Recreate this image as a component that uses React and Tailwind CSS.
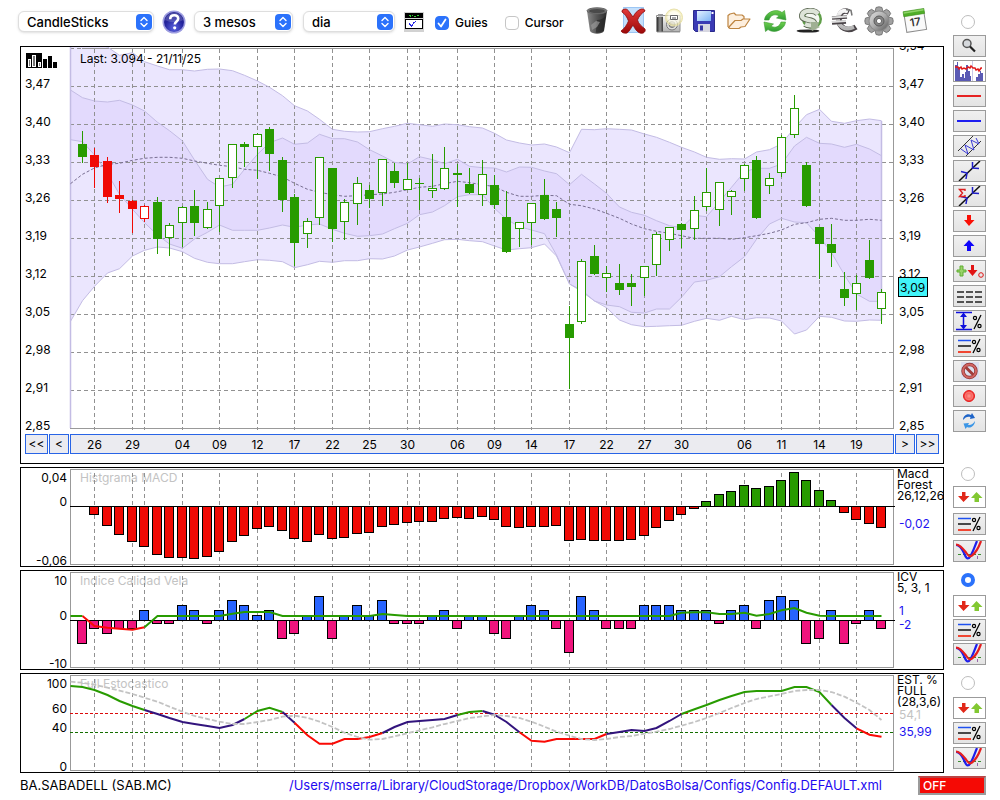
import React, { useState } from "react";

/* ---------- shared chart geometry ---------- */

const LEFT = 70;
const RIGHT = 893;
const xAt = (i) => (i < 0 ? LEFT + 0.5 : Math.floor(82.5 + 12.485 * i) + 0.5);

const GUIDES = [1, 4, 5, 8, 11, 14, 17, 20, 23, 26, 27, 30, 33, 36, 39, 42, 45, 48, 50, 53, 56, 59, 62];

const DATES = [
  [1, "26"], [4, "29"], [8, "04"], [11, "09"], [14, "12"], [17, "17"], [20, "22"], [23, "25"], [26, "30"],
  [30, "06"], [33, "09"], [36, "14"], [39, "17"], [42, "22"], [45, "27"], [48, "30"], [53, "06"], [56, "11"],
  [59, "14"], [62, "19"],
];

/* Series start one step before the first candle. */
const points = (ys, start = -1) => ys.map((y, k) => `${xAt(k + start)},${y}`);
const line = (ys, start = -1) => "M" + points(ys, start).join("L");
const area = (top, bottom) => "M" + points(top).concat(points(bottom).reverse()).join("L") + "Z";

/* ---------- price data (y coordinates) ---------- */

const OUTER_TOP = [
  44, 44, 44, 47, 55.3, 52.7, 61.7, 66, 69.7, 69.7, 71, 69.3, 69, 70.7, 75.3, 81, 87.3, 95.7, 105.7, 111, 119.3,
  129.3, 131.3, 132, 131.7, 128.7, 126.3, 123.3, 124.7, 126.3, 124, 124.7, 126.7, 128, 133.3, 140, 143, 145, 144,
  147, 152.7, 129.3, 129.7, 128.7, 129.3, 130, 134, 137.3, 142.3, 147.3, 152, 157.3, 159.3, 158.7, 159, 152, 149.7,
  144, 127.7, 114.7, 109.3, 121.3, 123.3, 120.7, 119, 120.7,
];
const OUTER_BOTTOM = [
  321.3, 300.7, 286.3, 273, 268.7, 256, 250.3, 247, 248, 251.7, 258.3, 262.3, 263.7, 263.7, 261.7, 259.7, 260.3,
  261.7, 267.7, 264.7, 261.3, 262.3, 260.7, 260.7, 258.7, 259, 256, 250, 247, 243.3, 239.7, 239.3, 240.7, 241.7,
  246, 250, 248.7, 247.7, 244, 256, 284, 291.3, 301, 307.7, 320, 324.7, 326.7, 326.3, 325.7, 325.3, 321.3, 318.3,
  320.3, 316.3, 319.7, 317.7, 318, 321, 334, 330, 316.3, 317.3, 321, 321.3, 320, 320.3,
];
const INNER_TOP = [
  90, 97.7, 101, 102, 100.3, 105, 111, 122.3, 130.7, 141, 160, 179.3, 187, 184.3, 169.3, 154.3, 142.7, 138, 144.3,
  143, 134.3, 138.7, 138.7, 142, 149.7, 156, 162.3, 164, 156.7, 159.7, 163.7, 159.3, 166.3, 167.7, 168, 172, 167,
  167.3, 171, 173.7, 184.7, 174.3, 184, 193.3, 207, 212.3, 215.3, 220.7, 225.7, 227.7, 215.3, 216.7, 201.7, 187.3,
  171.7, 168.3, 168.3, 164, 146, 137.3, 143.3, 144, 147.3, 144.3, 149, 155.7,
];
const INNER_BOTTOM = [
  139.7, 141.7, 155, 173.3, 194.3, 209.3, 222.7, 235, 244, 248.3, 239, 232.3, 225, 230.3, 230.3, 230.3, 228, 225,
  227.3, 225, 224, 229.3, 233.3, 236.3, 235.7, 234, 228.7, 223.3, 214.7, 212, 205.7, 196.7, 194.7, 194.7, 208.3,
  219.3, 226.7, 230, 233.7, 255, 284, 290, 301, 305, 306.7, 312.3, 313, 309, 309, 297.3, 282, 280.3, 276.7, 266.7,
  256.7, 239.3, 224, 218.3, 222, 222.7, 236.7, 252.7, 275, 294, 301.3, 301.3,
];
const AVERAGE = [
  183.7, 174.3, 168, 164.3, 163.3, 160.3, 158.3, 157.3, 157.3, 158.3, 161, 163.3, 165.3, 166.7, 169.3, 170.3, 173.3,
  177, 183.3, 189.3, 192.3, 194.7, 196.3, 195.7, 194.7, 194, 192.3, 189.7, 187.3, 186.3, 183.7, 181.3, 182.7, 184.7,
  186.7, 192.3, 196.3, 196.3, 195.3, 195.7, 204.3, 205.7, 209, 213.3, 218.3, 224, 228.7, 231.3, 233.3, 235.7, 238.3,
  238.3, 238.3, 239.3, 237.7, 235.7, 233.3, 230, 224.3, 222.7, 219.3, 218.3, 220.3, 220.3, 219.3, 220.3,
];

/* [wick top, wick bottom, body top, body bottom, kind]  f = falling, h = hollow, R / r = red filled / hollow */
const CANDLES = [
  [131, 163, 144, 157, "f"], [148, 188, 155, 167, "R"], [157, 203, 161, 197, "R"], [181, 213, 195, 199, "R"],
  [200, 233, 201, 209, "R"], [205, 222, 206, 219, "r"], [197, 254, 202, 239, "f"], [223, 256, 225, 238, "h"],
  [206, 247, 207, 223, "h"], [190, 236, 206, 223, "f"], [202, 229, 209, 228, "h"], [178, 232, 178, 206, "h"],
  [144, 188, 144, 178, "h"], [142, 167, 144, 147, "f"], [133, 179, 134, 147, "h"], [127, 171, 129, 154, "f"],
  [157, 212, 160, 200, "f"], [194, 266, 197, 243, "f"], [218, 248, 221, 234, "h"], [157, 225, 157, 218, "h"],
  [168, 242, 168, 229, "f"], [199, 240, 202, 222, "h"], [177, 225, 183, 204, "h"], [185, 208, 190, 199, "f"],
  [159, 206, 159, 193, "h"], [163, 188, 171, 183, "f"], [163, 190, 179, 190, "h"], [178, 210, 183, 184, "f"],
  [154, 198, 188, 191, "h"], [147, 190, 168, 189, "h"], [164, 207, 173, 175, "f"], [168, 194, 184, 193, "f"],
  [160, 206, 174, 195, "h"], [175, 209, 185, 205, "f"], [191, 253, 217, 252, "f"], [222, 247, 222, 229, "h"],
  [203, 245, 203, 223, "h"], [179, 220, 195, 219, "f"], [202, 237, 209, 218, "f"], [306, 389, 324, 338, "f"],
  [259, 324, 261, 322, "h"], [245, 275, 256, 274, "f"], [266, 292, 273, 278, "h"], [264, 295, 283, 290, "f"],
  [274, 306, 283, 287, "f"], [266, 296, 266, 278, "h"], [232, 276, 234, 265, "h"], [227, 251, 227, 240, "h"],
  [223, 248, 224, 230, "f"], [196, 240, 210, 229, "h"], [168, 211, 192, 207, "h"], [182, 226, 182, 210, "h"],
  [190, 215, 191, 197, "h"], [164, 191, 165, 179, "h"], [156, 219, 160, 218, "f"], [173, 194, 178, 186, "h"],
  [135, 177, 137, 173, "h"], [95, 138, 108, 135, "h"], [162, 207, 165, 206, "f"], [227, 279, 227, 244, "f"],
  [224, 267, 244, 253, "f"], [272, 306, 289, 298, "f"], [275, 310, 283, 294, "h"], [240, 279, 260, 278, "f"],
  [289, 324, 292, 309, "h"],
];

const PRICES = ["3,54", "3,47", "3,40", "3,33", "3,26", "3,19", "3,12", "3,05", "2,98", "2,91", "2,85"];

/* ---------- indicator data ---------- */

const MACD = [
  0, 515, 526, 535, 542, 547, 555, 558, 558, 559, 557, 552, 542, 536, 529, 527, 531, 539, 542, 535, 539, 538, 534,
  533, 527, 525, 523, 522, 522, 519, 518, 519, 517, 520, 527, 528, 527, 527, 526, 541, 540, 541, 541, 541, 540, 536,
  528, 521, 515, 509, 501, 494, 491, 485, 488, 486, 480, 472, 480, 490, 500, 513, 520, 524, 528,
];

const ICV = [
  -5, -2, -3, -2, -2, 2, -1, -1, 3, 2, -1, 2, 4, 3, 1, 2, -4, -3, 1, 5, -4, 1, 3, 1, 4, -1, -1, -1, 1, 2, -2, 1, 1,
  -3, -4, 1, 3, 2, -2, -7, 5, 2, -2, -2, -2, 3, 3, 3, 2, 2, 2, -1, 2, 3, -2, 4, 5, 4, -5, -4, 2, -5, -1, 2, -2,
];
const flat = (n) => Array(n).fill(616);
const ICV_RED = [616, 626, 627.7, 628.7, 629.7, 627.3];
const ICV_GREEN = [
  627.3, 616, ...flat(5), 613.7, 612, 612, 612, ...flat(8), 614, 615, ...flat(22), 612.7, 612.3, 612.3, 614, 614,
  612.7, 615.7, 614, 610.3, 608, 612.7, 615.7, ...flat(5),
];

const STOCH = [
  686, 687, 690, 695, 701, 706, 710, 714, 718, 722, 724, 726, 728, 725, 719, 711, 707.7, 712, 722.7, 735.3, 743.7,
  743.7, 739, 739, 737, 733, 727, 722, 721, 720, 719, 715, 712, 711, 714.7, 722, 732.3, 740.7, 741.7, 739, 739, 739,
  739, 734, 732, 730, 731, 728, 721, 714, 709.3, 705, 700, 696, 692, 691, 691, 691, 687, 687, 692, 705, 718, 728.3,
  734.7, 736.7,
];
const STOCH_SLOW = [
  681.7, 682.7, 684.7, 687.7, 690.7, 694, 697.7, 701.7, 706.7, 711.7, 716, 719, 721.7, 724, 724, 722, 720, 716.7,
  715.7, 717.7, 721.7, 727, 732.7, 737, 739.7, 739, 736.3, 733.3, 730.3, 727.3, 724, 721, 718, 716.3, 715, 716, 718,
  721.7, 726.7, 731.7, 735.7, 739, 740, 739, 737, 736, 733.7, 731.7, 729, 725.7, 722, 718, 713, 708, 703, 699, 696.3,
  694, 691, 690, 690, 692, 696.7, 702.7, 710, 720,
];
const GREEN = "#289b00";
const PURPLE = "#32147d";
const RED = "#fa0a05";
const STOCH_RUNS = [
  [-1, 5, GREEN], [5, 13, PURPLE], [13, 16, GREEN], [16, 17, PURPLE], [17, 24, RED], [24, 30, PURPLE],
  [30, 32, GREEN], [32, 35, PURPLE], [35, 42, RED], [42, 48, PURPLE], [48, 60, GREEN], [60, 62, PURPLE],
  [62, 64, RED],
];

/* ---------- chart pieces ---------- */

function Guides({ top, bottom }) {
  return (
    <g stroke="#919191" strokeDasharray="4 3" shapeRendering="crispEdges">
      {GUIDES.map((i) => (
        <line key={i} x1={xAt(i)} x2={xAt(i)} y1={top} y2={bottom} />
      ))}
    </g>
  );
}

function PlotFrame({ top, bottom }) {
  return (
    <rect x={LEFT + 0.5} y={top + 0.5} width={RIGHT - LEFT} height={bottom - top} fill="none" stroke="#999" shapeRendering="crispEdges" />
  );
}

function Bar({ i, top, bottom, fill }) {
  return (
    <rect x={xAt(i) - 5} y={top + 0.5} width="9" height={bottom - top - 1} fill={fill} stroke="#000" shapeRendering="crispEdges" />
  );
}

const svgText = "block h-auto w-full font-['Inter','Liberation_Sans',sans-serif] text-[12px]";

function PriceChart() {
  return (
    <svg viewBox="21 47 922 387" className={svgText} role="img" aria-label="BA.SABADELL">
      <path d={area(OUTER_TOP, OUTER_BOTTOM)} fill="#ebe6fe" />
      <path d={area(INNER_TOP, INNER_BOTTOM)} fill="#e3dafd" />
      <g stroke="#919191" strokeDasharray="4 3" shapeRendering="crispEdges">
        {PRICES.map((p, k) => (
          <line key={p} x1={LEFT} x2={RIGHT + 2} y1={48.5 + k * 38} y2={48.5 + k * 38} />
        ))}
      </g>
      <Guides top={49} bottom={430} />
      <path d="M82 48.5H893.5V428.5H70.5V320" fill="none" stroke="#999" shapeRendering="crispEdges" />
      <g fill="none" stroke="#c3bce4">
        <path d={line(OUTER_TOP)} />
        <path d={line(OUTER_BOTTOM)} />
        <path d={line(INNER_TOP)} />
        <path d={line(INNER_BOTTOM)} />
        <path d="M70.5 47V428M881.5 121V320" strokeWidth="1.5" />
      </g>
      <path d={line(AVERAGE)} fill="none" stroke="#786e91" strokeDasharray="3 2" />
      <g shapeRendering="crispEdges">
        {CANDLES.map(([hi, lo, top, bottom, kind], i) => {
          const x = xAt(i);
          const color = kind === "R" || kind === "r" ? "#f00a05" : GREEN;
          const hollow = kind === "h" || kind === "r";
          return (
            <g key={i}>
              <line x1={x} x2={x} y1={hi} y2={lo} stroke={color} />
              {hollow ? (
                <rect x={x - 4} y={top + 0.5} width="8" height={bottom - top - 1} fill="#fff" stroke={color} />
              ) : (
                <rect x={x - 4.5} y={top} width="9" height={bottom - top} fill={color} />
              )}
            </g>
          );
        })}
      </g>
      <text x="80" y="63">Last: 3.094 - 21/11/25</text>
      {PRICES.map((p, k) => (
        <React.Fragment key={p}>
          {k > 0 && <text x="25" y={50 + k * 38}>{p}</text>}
          <text x="899" y={50 + k * 38}>{p}</text>
        </React.Fragment>
      ))}
      <rect x="898.5" y="277.5" width="29" height="19" fill="#41f5fa" stroke="#000" shapeRendering="crispEdges" />
      <text x="900" y="292">3,09</text>
    </svg>
  );
}

function DateStrip() {
  return (
    <svg viewBox="71 435 822 18" className={svgText} role="img" aria-label="Dates">
      {DATES.map(([i, d]) => (
        <text key={i} x={xAt(i)} y="449" textAnchor="middle">{d}</text>
      ))}
    </svg>
  );
}

function AxisLabels({ items }) {
  return (
    <g textAnchor="end">
      {items.map(([label, y]) => (
        <text key={label} x="67" y={y}>{label}</text>
      ))}
    </g>
  );
}

function Legend({ rows }) {
  return rows.map(([label, x, y, fill]) => (
    <text key={label} x={x} y={y} fill={fill || "#000"}>{label}</text>
  ));
}

function MacdChart() {
  return (
    <svg viewBox="21 468 922 98" className={svgText} role="img" aria-label="MACD">
      <PlotFrame top={469} bottom={564} />
      <text x="80" y="482" fill="#c3c3c3">Histgrama MACD</text>
      <Guides top={473} bottom={566} />
      {MACD.map((y, i) =>
        y === 0 ? null : y > 506 ? (
          <Bar key={i} i={i} top={506} bottom={y} fill="#f00a05" />
        ) : (
          <Bar key={i} i={i} top={y} bottom={507} fill={GREEN} />
        )
      )}
      <path d="M70 506.5H895" stroke="#000" shapeRendering="crispEdges" />
      <AxisLabels items={[["0,04", 482], ["0", 506], ["-0,06", 565]]} />
      <Legend rows={[["Macd", 897, 478], ["Forest", 897, 489], ["26,12,26", 897, 500], ["-0,02", 899, 528, "#1e14f0"]]} />
    </svg>
  );
}

function IcvChart() {
  return (
    <svg viewBox="21 571 922 98" className={svgText} role="img" aria-label="ICV">
      <PlotFrame top={572} bottom={667} />
      <text x="80" y="585" fill="#c3c3c3">Indice Calidad Vela</text>
      <Guides top={576} bottom={669} />
      {ICV.map((v, i) =>
        v > 0 ? (
          <Bar key={i} i={i} top={620 - Math.min(v * 5, 24)} bottom={621} fill="#2864ff" />
        ) : (
          <Bar key={i} i={i} top={620} bottom={v === -7 ? 653 : 619 - v * 5} fill="#f0147d" />
        )
      )}
      <path d="M70 620.5H895" stroke="#000" shapeRendering="crispEdges" />
      <g fill="none" strokeWidth="2">
        <path d={line([616, 616])} stroke={GREEN} />
        <path d={line(ICV_RED, 0)} stroke={RED} />
        <path d={line(ICV_GREEN, 5)} stroke={GREEN} />
      </g>
      <AxisLabels items={[["10", 585], ["0", 620], ["-10", 668]]} />
      <Legend rows={[["ICV", 897, 581], ["5, 3, 1", 897, 592], ["1", 899, 615, "#1e14f0"], ["-2", 899, 629, "#1e14f0"]]} />
    </svg>
  );
}

function StochasticChart() {
  return (
    <svg viewBox="21 674 922 98" className={svgText} role="img" aria-label="Full Estocastico">
      <PlotFrame top={675} bottom={770} />
      <text x="80" y="688" fill="#c3c3c3">Full Estocastico</text>
      <Guides top={679} bottom={772} />
      <path d="M70 713.5H895" stroke="#dc0a0a" strokeDasharray="3 2" shapeRendering="crispEdges" />
      <path d="M70 732.5H895" stroke="#146e00" strokeDasharray="3 2" shapeRendering="crispEdges" />
      <g fill="none" strokeWidth="2">
        {STOCH_RUNS.map(([a, b, color]) => (
          <path key={a} d={line(STOCH.slice(a + 1, b + 2), a)} stroke={color} />
        ))}
        <path d={line(STOCH_SLOW)} stroke="#c3c3c3" strokeDasharray="5 2" strokeWidth="1.8" />
      </g>
      <AxisLabels items={[["100", 688], ["60", 713], ["40", 732], ["0", 771]]} />
      <Legend
        rows={[
          ["EST. %", 897, 684], ["FULL", 897, 695], ["(28,3,6)", 897, 706], ["54,1", 899, 719, "#c3c3c3"],
          ["35,99", 899, 736, "#1e14f0"],
        ]}
      />
    </svg>
  );
}

/* ---------- toolbar icons ---------- */

function IconDefs() {
  return (
    <svg className="absolute h-0 w-0" aria-hidden="true">
      <defs>
        <linearGradient id="metal" x1="0" x2="1" y1="0" y2="1">
          <stop offset="0" stopColor="#f4f4f4" />
          <stop offset=".5" stopColor="#b5b5b5" />
          <stop offset="1" stopColor="#4c4c4c" />
        </linearGradient>
        <linearGradient id="can" x1="0" x2="1">
          <stop offset="0" stopColor="#8a8a8a" />
          <stop offset=".5" stopColor="#555" />
          <stop offset="1" stopColor="#2b2b2b" />
        </linearGradient>
        <linearGradient id="grip" x1="0" x2="1">
          <stop offset="0" stopColor="#2c2c2c" />
          <stop offset=".5" stopColor="#8f8f8f" />
          <stop offset="1" stopColor="#3c3c3c" />
        </linearGradient>
        <linearGradient id="silver" x1="0" x2="0" y1="0" y2="1">
          <stop offset="0" stopColor="#f8f8f8" />
          <stop offset="1" stopColor="#b4b4b4" />
        </linearGradient>
        <radialGradient id="help" cx=".5" cy=".8" r=".8">
          <stop offset="0" stopColor="#5a62e0" />
          <stop offset=".6" stopColor="#23239b" />
          <stop offset="1" stopColor="#2a2a90" />
        </radialGradient>
        <linearGradient id="leaf" x1="0" x2="0" y1="0" y2="1">
          <stop offset="0" stopColor="#6fd04e" />
          <stop offset="1" stopColor="#2d9a32" />
        </linearGradient>
        <linearGradient id="cross" x1="0" x2="0" y1="0" y2="1">
          <stop offset="0" stopColor="#e23a3a" />
          <stop offset="1" stopColor="#9c0808" />
        </linearGradient>
        <linearGradient id="sky" x1="0" x2="1" y1="0" y2="1">
          <stop offset="0" stopColor="#e2f1ff" />
          <stop offset="1" stopColor="#7db4f5" />
        </linearGradient>
        <radialGradient id="glow">
          <stop offset="0" stopColor="#fff" stopOpacity=".9" />
          <stop offset=".7" stopColor="#fffce6" stopOpacity=".7" />
          <stop offset="1" stopColor="#e6dc78" stopOpacity=".5" />
        </radialGradient>
        <radialGradient id="ball">
          <stop offset="0" stopColor="#ff9a90" />
          <stop offset="1" stopColor="#f03030" />
        </radialGradient>
      </defs>
    </svg>
  );
}

const HelpIcon = () => (
  <svg viewBox="0 0 24 24" className="h-6 w-6">
    <circle cx="12" cy="12" r="11.5" fill="#9c9ce0" />
    <circle cx="12" cy="12" r="10" fill="url(#help)" />
    <path d="M3 10a9.2 9.2 0 0 1 18 0c-5 3-12 3-18 0z" fill="#fff" opacity=".18" />
    <path d="M8.200 9.300c0-2.600 1.700-4.100 4-4.100 2.400 0 4 1.400 4 3.500 0 2.600-3.400 3-3.400 5.800" fill="none" stroke="#fff" strokeWidth="2.600" />
    <circle cx="12.700" cy="17.800" r="1.600" fill="#fff" />
  </svg>
);

const ScreenIcon = () => (
  <svg viewBox="0 0 20 20" className="h-5 w-5" shapeRendering="crispEdges">
    <path d="M0 0h20v20H0z" fill="#d2d2d2" />
    <path d="M1 1h18v5H1z" fill="#000" />
    <path d="M5 3.500h2M8 3.500h1M10 4.500h2M13 3.500h2M6 4.500h1" stroke="#2fd02f" />
    <path d="M1.500 7.500h17v9h-17z" fill="#fff" stroke="#000" />
    <path d="M5 12h1M6 13h1M7 14h1M8 13h1M9 11h1M10 10.500h1M11 9.500h1" fill="none" stroke="#2828e6" strokeWidth="1.400" />
  </svg>
);

const TrashIcon = () => (
  <svg viewBox="0 0 22 28" className="h-7 w-[22px]">
    <path d="M1 4l3 20c2 3.500 12 3.500 14 0l3-20z" fill="url(#can)" />
    <path d="M11 13c4 0 7-2 8.600-4l-1.800 14c-2 2.500-6 3-8 2.500z" fill="#222" opacity=".6" />
    <path d="M5 18l5-4 4 1-3 5-5 3z" fill="#9a9a9a" opacity=".7" />
    <ellipse cx="11" cy="3.800" rx="10" ry="3" fill="#777" stroke="#666" />
    <ellipse cx="11" cy="4" rx="8" ry="2" fill="#4a4a4a" />
  </svg>
);

const DeleteIcon = () => (
  <svg viewBox="0 0 26 27" className="h-[27px] w-[26px]">
    <path d="M3 0h21v26H3z" fill="#c4e0fc" />
    <path d="M3.500.5h20v25h-20z" fill="none" stroke="#9cc6f4" />
    <path d="M2 3.500C5 1 7.500 2 9 4.500l4 5.500c2-4 4-6 7-7.500 2-1 5-.5 5 1.500-3 2-6 5-7.500 9 1 4 4 6 7.500 9 1 3-2 5-5 4-3-1-5-4-7-8-2 3-4 7-6 8-2 .5-5 0-6-2 3-2 6-6 7.500-10C7 10 5 7 2 5z" fill="url(#cross)" stroke="#8c0a0a" strokeWidth=".8" />
  </svg>
);

const CameraIcon = () => (
  <svg viewBox="0 0 28 26" className="h-[26px] w-7">
    <path d="M2 24.500h23" stroke="#ccc" />
    <path d="M1.500 7.500h23.500v16H1.500z" fill="url(#silver)" stroke="#8f8f8f" />
    <path d="M2 9h6v14.500H2z" fill="url(#grip)" />
    <path d="M3 6h5v2.500H3z" fill="#9a9a9a" />
    <circle cx="17" cy="16.500" r="5.500" fill="#ddd" stroke="#777" />
    <circle cx="17" cy="16.500" r="3" fill="#aaa" stroke="#777" />
    <circle cx="19" cy="9.500" r="8.500" fill="url(#glow)" stroke="#e8e1ac" />
    <path d="M15.500 7.500h7v4h-7z" fill="#fff" stroke="#666" />
    <path d="M17 9h4v2h-4z" fill="#aaa" />
  </svg>
);

const SaveIcon = () => (
  <svg viewBox="0 0 22 22" className="h-[22px] w-[22px]">
    <path d="M.5.500h21v21h-19l-2-2z" fill="#3a3ab4" stroke="#2a2a8c" />
    <path d="M4 1h14v10H4z" fill="url(#sky)" />
    <path d="M5 14h12v8H5z" fill="#d7d7e1" />
    <path d="M7 15.500h3v5H7z" fill="#3535a5" />
    <path d="M18.500 2h2v2h-2z" fill="#fff" />
  </svg>
);

const FolderIcon = () => (
  <svg viewBox="0 0 24 18" className="h-[18px] w-6" strokeLinejoin="round">
    <path d="M1 15V3.500l2-1.500 4-1 2 2h6l2 1.500V8" fill="#fdf0e0" stroke="#bd8440" strokeWidth="1.200" />
    <path d="M1.500 15.500L8 8.500h6L16 7h7l-5 7.500-4 .5-2 1.500H3z" fill="#fdeedd" stroke="#bd8440" strokeWidth="1.200" />
  </svg>
);

const ReloadIcon = () => (
  <svg viewBox="0 0 24 24" className="h-6 w-6">
    <path d="M1.500 11C2 4 12-1.500 19 3.500L21.500 1.500 23 11l-9.500-2 2.500-2C12 4.500 7.500 6 6 11z" fill="url(#leaf)" stroke="#3c9b32" strokeWidth=".6" />
    <path d="M22.500 13C22 20 12 25.500 5 20.500L2.500 22.500 1 13l9.500 2-2.500 2C12 19.500 16.500 18 18 13z" fill="url(#leaf)" stroke="#3c9b32" strokeWidth=".6" />
  </svg>
);

const DollarIcon = () => (
  <svg viewBox="0 0 27 25" className="h-[25px] w-[27px]">
    <ellipse cx="12" cy="23" rx="11.500" ry="1.600" fill="#222" />
    <circle cx="16" cy="11" r="10" fill="#5f9e48" />
    <circle cx="16" cy="11" r="7.500" fill="#f4f7f2" />
    <path d="M22 6c-4-5-16-4-16 2 0 5 12 3 12 7 0 3-6 3-9 1" fill="none" stroke="#59654f" strokeWidth="6" />
    <path d="M22 6c-4-5-16-4-16 2 0 5 12 3 12 7 0 3-6 3-9 1" fill="none" stroke="#dde4d8" strokeWidth="4.400" />
    <path d="M15 14h8l-1 4 2 1-8 4-1-3z" fill="#9fb093" />
  </svg>
);

const EuroIcon = () => (
  <svg viewBox="0 0 27 26" className="h-[26px] w-[27px]">
    <path d="M18 4C12 1 8 5 8 12s8 13 17 7" fill="none" stroke="#4a4448" strokeWidth="5.500" />
    <path d="M17 3.500C11 1 7 5 7 11.500S14 23 23 19" fill="none" stroke="url(#silver)" strokeWidth="4" />
    <path d="M1 10l15-1M1 15l14-1" stroke="#4a4448" strokeWidth="3.600" />
    <path d="M1 9.500l15-1M1 14l14-1" stroke="#dcdcdc" strokeWidth="2.200" />
    <path d="M15 1.500l5 1 1 5" fill="none" stroke="#777" strokeWidth="1.500" />
  </svg>
);

const GearIcon = () => (
  <svg viewBox="-15 -15 30 30" className="h-[30px] w-[30px]">
    {[0, 45, 90, 135, 180, 225, 270, 315].map((a) => (
      <path key={a} d="M-4-9l1-4.500q3-1.500 6 0l1 4.500z" transform={`rotate(${a})`} fill="#a2a2a2" stroke="#6a6a6a" strokeWidth=".8" />
    ))}
    <circle r="10.500" fill="#8b8b8b" />
    <circle r="9.500" fill="url(#metal)" opacity=".8" />
    <circle r="5" fill="#858585" stroke="#5a5a5a" />
    <circle r="2.600" fill="#fff" stroke="#666" />
  </svg>
);

const CalendarIcon = () => (
  <svg viewBox="0 0 26 25" className="h-[25px] w-[26px]">
    <g transform="rotate(-9 13 12)">
      <path d="M3 5h20v18H3z" fill="#fafafa" stroke="#8c8c8c" />
      <path d="M2.500 2h21v5h-21z" fill="#4fae28" stroke="#3d8f1c" strokeWidth=".6" />
      <path d="M3 2.500h20v1.500H3z" fill="#8ed468" />
      <text x="13" y="18" textAnchor="middle" className="font-['Inter',sans-serif] text-[11px] font-semibold" fill="#333">17</text>
    </g>
  </svg>
);

/* ---------- side tool icons, all on a 31 x 20 canvas ---------- */

const Pic = ({ children }) => (
  <svg viewBox="0 0 31 20" className="block h-5 w-[31px]" fill="none" aria-hidden="true">{children}</svg>
);

const Percent = ({ x, y }) => (
  <g transform={`translate(${x} ${y})`} stroke="#000" strokeWidth="1.200">
    <circle cx="2" cy="3" r="1.600" />
    <circle cx="6.500" cy="11" r="1.600" />
    <path d="M8 0L1 14" />
  </g>
);

const MagnifierPic = () => (
  <Pic>
    <circle cx="13" cy="7.500" r="4" fill="#d5d8dc" stroke="#555" strokeWidth="1.500" />
    <path d="M16 10.500l5 5" stroke="#222" strokeWidth="2.200" />
  </Pic>
);
const VolumePic = () => (
  <Pic>
    <path d="M0 0h31v20H0z" fill="#fff" />
    <path d="M1 20V4h2V1h1v5h2v14zM6 20v-4h2v-3h2v4h1v-6h1V4h2v6h2v5h1v5zM22 20v-4h2v-3h2v-3h1v2h2v8z" fill="#5a5ab4" />
    <path d="M18.500 0v20" stroke="#c8c8e6" />
    <path d="M1 6h3l1 2 2-2 1 2 2-1 2 1 2-2 2 1 1-2 2 2 2 0 1 2 2-1 1 2 2-3 1 0" stroke="#e11919" strokeWidth="1.500" />
  </Pic>
);
const RedLinePic = () => <Pic><path d="M3 10h24" stroke="#e62323" strokeWidth="2" /></Pic>;
const BlueLinePic = () => <Pic><path d="M3 10h24" stroke="#1e1ef0" strokeWidth="2" /></Pic>;
const ChannelPic = () => (
  <Pic>
    <path d="M4 15L19 0M12 20L27 5" stroke="#333" />
    <path d="M7 13l7 5-3-9 9 5-3-10 8 4-3-6" stroke="#3c3cd7" />
  </Pic>
);
const ArrowsShape = () => (
  <>
    <path d="M5 20L26 0" stroke="#111" strokeWidth="1.500" />
    <path d="M7 10.500l6 1.500-1 6M18.500 1v6l6.500.500" stroke="#1e1ec8" strokeWidth="1.500" />
  </>
);
const TrendPic = () => <Pic><ArrowsShape /></Pic>;
const SumPic = () => (
  <Pic>
    <ArrowsShape />
    <path d="M11 5V3.500H5.500l3 3.500-3 3.500H11V9" stroke="#dc1e1e" strokeWidth="1.400" />
  </Pic>
);
const DownPic = () => <Pic><path d="M13 4h4v5h3.500L15 15l-5-6H13z" fill="#fa0f05" /></Pic>;
const UpPic = () => <Pic><path d="M15 4l5.500 6H17v5h-4v-5H9.500z" fill="#0f05fa" /></Pic>;
const AddPic = () => (
  <Pic>
    <path d="M6 5h3v4h3v2H9v4H6v-4H3V9h3z" fill="#9ad268" stroke="#5fae32" />
    <path d="M17 4h3v5h3.500L18.500 15l-5-6H17z" fill="#e11414" />
    <circle cx="27" cy="14" r="2.300" stroke="#e11414" />
  </Pic>
);
const DashesPic = () => (
  <Pic><path d="M3 6h25M3 11h25M3 16h25" stroke="#222" strokeWidth="1.500" strokeDasharray="7 2" /></Pic>
);
const RangePic = () => (
  <Pic>
    <path d="M2 1.500h16M2 18.500h16M9.500 3v14" stroke="#0f0fdc" strokeWidth="1.500" />
    <path d="M9.500 1.500L13 6H6zM9.500 18.500L13 14H6z" fill="#0f0fdc" />
    <Percent x={19} y={4} />
  </Pic>
);
const LevelsPic = () => (
  <Pic>
    <path d="M4 4.500h13" stroke="#1e50f0" strokeWidth="1.500" />
    <path d="M4 10h13" stroke="#111" strokeWidth="1.500" />
    <path d="M4 16h13" stroke="#f04632" strokeWidth="2" />
    <Percent x={18} y={3} />
  </Pic>
);
const ForbidPic = () => (
  <Pic>
    <path d="M7 1h18v18H7z" fill="#dcdff0" />
    <circle cx="15.500" cy="10" r="6.500" stroke="#8c3232" strokeWidth="3.400" />
    <path d="M11 5.500l9 9" stroke="#a03c3c" strokeWidth="3" />
    <circle cx="15.500" cy="10" r="6.500" stroke="#d26464" strokeWidth="2" />
  </Pic>
);
const RecordPic = () => (
  <Pic>
    <circle cx="15" cy="10" r="5.500" fill="url(#ball)" stroke="#e61e1e" />
    <circle cx="15" cy="10" r="3.800" stroke="#fa8c82" strokeWidth=".7" />
  </Pic>
);
const SyncPic = () => (
  <Pic>
    <path d="M9 9c0-4 4-7 8-5l1-2 3 5-5 1 .5-2c-3-1-5 0-7.500 3z" fill="#1e64c8" />
    <path d="M21 10c0 4-4 8-8 6l-1.500 2-2-5.500 5.500-.5-1 2c3 .5 5-1 7-4z" fill="#3c96e6" />
  </Pic>
);
const SignalsPic = () => (
  <Pic>
    <path d="M8 5h3.500v4h4L9.500 15 4 9h4z" fill="#e12819" />
    <path d="M22.500 5l6 6H25v4h-4.500v-4H17z" fill="#82c832" />
  </Pic>
);
const CurvesPic = () => (
  <Pic>
    <path d="M4 13.500h24" stroke="#3c8c32" strokeDasharray="3 2" />
    <path d="M23.500 15v5" stroke="#96a" strokeDasharray="3 2" />
    <path d="M2 4c4 0 6 4 8 8 2 5 3 6 5 5 3-3 5-10 8-17" stroke="#1e1eeb" strokeWidth="2.200" />
    <path d="M2 3.500c4 0 7 4 10 8 2 3 4 5 6 3 4-3 7-9 9-14.500" stroke="#e61e1e" strokeWidth="2.200" />
  </Pic>
);

/* ---------- controls ---------- */

function Select({ label, value, options, className }) {
  return (
    <span className={`relative block ${className}`}>
      <select
        aria-label={label}
        defaultValue={value}
        className="block h-[21px] w-full appearance-none rounded-md border border-[#dedede] bg-white pl-2 text-[13px] leading-4 font-medium shadow-sm"
      >
        {options.map((o) => <option key={o}>{o}</option>)}
      </select>
      <svg viewBox="0 0 16 16" className="pointer-events-none absolute top-[3px] right-[2px] h-4 w-4" aria-hidden="true">
        <rect width="16" height="16" rx="4" fill="#2b72fb" />
        <path d="M5 6.500l3-3 3 3M5 9.500l3 3 3-3" fill="none" stroke="#fff" strokeWidth="1.400" strokeLinecap="round" strokeLinejoin="round" />
      </svg>
    </span>
  );
}

function Check({ label, defaultChecked }) {
  return (
    <label className="relative flex items-center gap-[6px] text-[12px] font-medium">
      <input
        type="checkbox"
        defaultChecked={defaultChecked}
        className="peer h-[14px] w-[14px] appearance-none rounded-[4px] border border-[#c6c6c6] bg-white checked:border-[#2b72fb] checked:bg-[#2b72fb]"
      />
      <svg viewBox="0 0 14 14" className="pointer-events-none invisible absolute left-0 h-[14px] w-[14px] peer-checked:visible" aria-hidden="true">
        <path d="M3.500 7.500L6 10.500 10.500 3.500" fill="none" stroke="#fff" strokeWidth="1.800" strokeLinecap="round" strokeLinejoin="round" />
      </svg>
      {label}
    </label>
  );
}

function PanelRadio({ id, selected, onSelect, className = "" }) {
  return (
    <input
      type="radio"
      name="panel"
      aria-label={id}
      checked={selected === id}
      onChange={() => onSelect(id)}
      className={`ml-2 h-[14px] w-[14px] shrink-0 appearance-none rounded-full border border-[#bdbdbd] bg-white checked:border-4 checked:border-[#2b72fb] ${className}`}
    />
  );
}

function IconButton({ label, children, className = "" }) {
  return (
    <button type="button" aria-label={label} className={`flex shrink-0 items-center justify-center ${className}`}>
      {children}
    </button>
  );
}

function Tool({ label, children, plain }) {
  return (
    <button
      type="button"
      aria-label={label}
      className={`h-[22px] w-[33px] shrink-0 border border-[#9b9b9b] ${plain ? "bg-white" : "bg-linear-to-b from-[#f0f0f0] to-[#e4e4e4]"}`}
    >
      {children}
    </button>
  );
}

function IndicatorTools() {
  return (
    <>
      <Tool label="Signals" plain><SignalsPic /></Tool>
      <Tool label="Levels"><LevelsPic /></Tool>
      <Tool label="Curves"><CurvesPic /></Tool>
    </>
  );
}

const MAIN_TOOLS = [
  ["Zoom", MagnifierPic], ["Volume", VolumePic], ["Red line", RedLinePic], ["Blue line", BlueLinePic],
  ["Channel", ChannelPic], ["Trend", TrendPic], ["Sum", SumPic], ["Sell", DownPic], ["Buy", UpPic], ["Add", AddPic],
  ["Dashes", DashesPic], ["Range", RangePic], ["Levels", LevelsPic], ["Forbid", ForbidPic], ["Record", RecordPic],
  ["Sync", SyncPic],
];

function Toolbar() {
  return (
    <header className="flex h-[46px] items-start">
      <div className="-ml-[2px] flex h-[43px] items-center">
        <Select label="Chart type" value="CandleSticks" options={["CandleSticks", "Line"]} className="w-[136px]" />
        <IconButton label="Help" className="mx-2"><HelpIcon /></IconButton>
        <Select label="Period" value="3 mesos" options={["3 mesos", "6 mesos"]} className="w-[99px]" />
        <Select label="Interval" value="dia" options={["dia", "setmana"]} className="ml-[10px] w-[92px]" />
        <IconButton label="Screen" className="mr-[11px] ml-[9px]"><ScreenIcon /></IconButton>
      </div>
      <div className="flex h-[45px] items-center gap-[17px]">
        <Check label="Guies" defaultChecked />
        <Check label="Cursor" />
      </div>
      <div className="ml-[22px] flex h-[41px] items-center">
        <IconButton label="Discard"><TrashIcon /></IconButton>
        <IconButton label="Delete" className="ml-3"><DeleteIcon /></IconButton>
        <IconButton label="Snapshot" className="ml-[9px]"><CameraIcon /></IconButton>
        <IconButton label="Save" className="ml-[10px]"><SaveIcon /></IconButton>
        <IconButton label="Open" className="ml-3"><FolderIcon /></IconButton>
        <IconButton label="Reload" className="ml-3"><ReloadIcon /></IconButton>
        <IconButton label="Dollar" className="ml-[9px]"><DollarIcon /></IconButton>
        <IconButton label="Euro" className="ml-2"><EuroIcon /></IconButton>
        <IconButton label="Settings" className="ml-[6px]"><GearIcon /></IconButton>
        <IconButton label="Calendar" className="ml-2"><CalendarIcon /></IconButton>
      </div>
    </header>
  );
}

const navButton = "h-5 shrink-0 border border-[#2864e6] bg-[#ebebf0] text-center text-[12px] leading-[18px]";

export default function App() {
  const [selected, setSelected] = useState("icv");
  return (
    <div className="min-h-screen bg-white pr-[14px] pl-5 font-['Inter','Liberation_Sans',sans-serif] text-black">
      <IconDefs />
      <main className="flex flex-col gap-[3px]">
        <section className="flex gap-[9px]">
          <div className="min-w-0 flex-1">
            <Toolbar />
            <div className="relative border border-black pb-[9px]">
              <PriceChart />
              <svg viewBox="0 0 36 15" className="absolute top-[6px] left-[5px] h-[15px] w-9" aria-hidden="true" shapeRendering="crispEdges">
                <path d="M0 0h16v15H0z" fill="#000" />
                <path d="M2.500 6.500h2v7h-2zM6.500 2.500h3v11h-3zM12.500 9.500h2v4h-2z" stroke="#fff" fill="#777" />
                <path d="M17 6h4v9h-4zM22 3h4v12h-4zM27 9h4v6h-4z" fill="#000" />
              </svg>
              <div className="flex gap-px px-1">
                <button type="button" className={`${navButton} w-[23px]`}>&lt;&lt;</button>
                <button type="button" className={`${navButton} w-5`}>&lt;</button>
                <div className="min-w-0 flex-1 border border-[#2864e6] bg-[#ebebf0]"><DateStrip /></div>
                <button type="button" className={`${navButton} w-5`}>&gt;</button>
                <button type="button" className={`${navButton} w-[23px]`}>&gt;&gt;</button>
              </div>
            </div>
          </div>
          <aside className="flex flex-col gap-[3px] pt-[15px]">
            <PanelRadio id="price" selected={selected} onSelect={setSelected} className="mb-[3px]" />
            {MAIN_TOOLS.map(([label, Picture]) => (
              <Tool key={label} label={label}><Picture /></Tool>
            ))}
          </aside>
        </section>

        <section className="flex gap-[9px]">
          <div className="min-w-0 flex-1 border border-black"><MacdChart /></div>
          <aside className="flex flex-col gap-[5px]">
            <PanelRadio id="macd" selected={selected} onSelect={setSelected} />
            <IndicatorTools />
          </aside>
        </section>

        <section className="flex gap-[9px]">
          <div className="min-w-0 flex-1 border border-black"><IcvChart /></div>
          <aside className="flex flex-col gap-[2px] pt-[3px]">
            <PanelRadio id="icv" selected={selected} onSelect={setSelected} className="mb-[6px]" />
            <IndicatorTools />
          </aside>
        </section>

        <section className="flex gap-[9px]">
          <div className="min-w-0 flex-1 border border-black"><StochasticChart /></div>
          <aside className="flex flex-col gap-[3px] pt-[3px]">
            <PanelRadio id="stochastic" selected={selected} onSelect={setSelected} className="mb-1" />
            <IndicatorTools />
          </aside>
        </section>
      </main>

      <footer className="mt-[2px] flex items-center text-[13px] leading-5">
        <span>BA.SABADELL (SAB.MC)</span>
        <span className="mr-9 ml-auto text-[#1e0af0]">
          /Users/mserra/Library/CloudStorage/Dropbox/WorkDB/DatosBolsa/Configs/Config.DEFAULT.xml
        </span>
        <button type="button" className="h-[19px] w-[68px] border-2 border-[#9b9b9b] border-t-[#b44] bg-[#f50a05] pl-[3px] text-left text-[12px] leading-[15px] font-medium text-white">
          OFF
        </button>
      </footer>
    </div>
  );
}
